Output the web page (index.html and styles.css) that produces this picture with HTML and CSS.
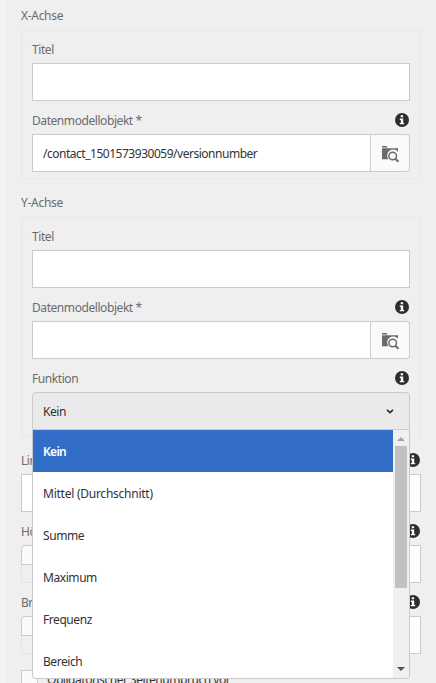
FILE: index.html
```html
<!DOCTYPE html>
<html lang="de">
<head>
<meta charset="utf-8">
<title>Diagramm-Eigenschaften</title>
<link rel="stylesheet" href="styles.css">
</head>
<body>
<svg class="defs" width="0" height="0" aria-hidden="true">
  <symbol id="info" viewBox="0 0 14 14">
    <circle cx="7" cy="7" r="7" fill="#2d2d2d"/>
    <path d="M5.7 2.3h2.4v2H5.7zM4.8 5.5h3.4v4.4h1v1.4H4.8V9.9h1V6.9h-1z" fill="#fff"/>
  </symbol>
  <symbol id="browse" viewBox="0 0 18 18">
    <path d="M1 1h4.6l1 1.4H1z" fill="#6b6b6b"/>
    <path d="M1 3.2h16v3.6a5.6 5.6 0 0 0-9.6 7.5H1z" fill="#6b6b6b"/>
    <circle cx="11.7" cy="11" r="3.8" fill="none" stroke="#6b6b6b" stroke-width="1.5"/>
    <path d="M14.4 13.8l3 3" stroke="#6b6b6b" stroke-width="2"/>
  </symbol>
</svg>
<main class="panel">
  <h2 class="heading">X-Achse</h2>
  <section class="well">
    <div class="field">
      <div class="label"><span>Titel</span></div>
      <div class="input"></div>
    </div>
    <div class="field">
      <div class="label"><span>Datenmodellobjekt *</span><svg class="info"><use href="#info"/></svg></div>
      <div class="group">
        <div class="input path">/contact_1501573930059/versionnumber</div>
        <div class="browse"><svg><use href="#browse"/></svg></div>
      </div>
    </div>
  </section>

  <h2 class="heading">Y-Achse</h2>
  <section class="well">
    <div class="field">
      <div class="label"><span>Titel</span></div>
      <div class="input"></div>
    </div>
    <div class="field">
      <div class="label"><span>Datenmodellobjekt *</span><svg class="info"><use href="#info"/></svg></div>
      <div class="group">
        <div class="input"></div>
        <div class="browse"><svg><use href="#browse"/></svg></div>
      </div>
    </div>
    <div class="field">
      <div class="label"><span>Funktion</span><svg class="info"><use href="#info"/></svg></div>
      <div class="select">
        <span class="value">Kein</span>
        <svg class="chevron" viewBox="0 0 8 5"><path d="M1 .8l3 2.8 3-2.8" fill="none" stroke="#2d2d2d" stroke-width="1.6"/></svg>
        <div class="menu">
          <ul class="options">
            <li class="option selected">Kein</li>
            <li class="option average">Mittel (Durchschnitt)</li>
            <li class="option">Summe</li>
            <li class="option">Maximum</li>
            <li class="option">Frequenz</li>
            <li class="option">Bereich</li>
          </ul>
          <div class="scrollbar">
            <i class="arrow up"></i>
            <i class="thumb"></i>
            <i class="arrow down"></i>
          </div>
        </div>
      </div>
    </div>
  </section>

  <div class="after">
    <div class="field">
      <div class="label"><span>Linie</span><svg class="info"><use href="#info"/></svg></div>
      <div class="input"></div>
    </div>
    <div class="field">
      <div class="label"><span>Höhe</span><svg class="info"><use href="#info"/></svg></div>
      <div class="group">
        <div class="stepper"><i></i><i></i></div>
        <div class="input"></div>
      </div>
    </div>
    <div class="field">
      <div class="label"><span>Breite</span><svg class="info"><use href="#info"/></svg></div>
      <div class="group">
        <div class="stepper"><i></i><i></i></div>
        <div class="input"></div>
      </div>
    </div>
    <div class="check"><i class="box"></i><span>Obligatorischer Seitenumbruch vor</span></div>
  </div>
</main>
</body>
</html>
```
FILE: styles.css
```css
* { box-sizing: border-box; }
html, body { height: 100%; }
body {
  margin: 0;
  overflow: hidden;
  background: #f4f4f4;
  color: #323232;
  font: 12px/18px "Noto Sans", "Open Sans", sans-serif;
  letter-spacing: -.43px;
}
.defs { position: absolute; }
.panel {
  height: 683px;
  margin-left: 6px;
  padding: 3px 15px 0;
  overflow: hidden;
  background: #efefef;
}
.heading {
  height: 27px;
  margin: 0;
  font-size: 12px;
  font-weight: 400;
  line-height: 26px;
  letter-spacing: -.3px;
  color: #6b6b6b;
}
.well {
  margin-bottom: 11px;
  padding: 0 10px 6px;
  border: 1px solid #e8e8e8;
}
.field { padding-top: 7px; }
.well .field:first-child { padding-top: 6px; }
.label {
  display: flex;
  justify-content: space-between;
  height: 26px;
  line-height: 26px;
  color: #6b6b6b;
}
.info { width: 14px; height: 14px; margin: 5px 1px 0 0; }
.input {
  height: 38px;
  padding: 0 10px;
  border: 1px solid #cbcbcb;
  background: #fff;
  line-height: 38px;
}
.path { letter-spacing: -.48px; }
.group { display: flex; }
.group .input { flex: 1; }
.browse {
  width: 39px;
  height: 38px;
  border: 1px solid #cbcbcb;
  border-left: 0;
  border-radius: 0 4px 4px 0;
  background: #fafafa;
}
.browse svg { display: block; width: 18px; height: 18px; margin: 10px 0 0 10px; }
.select {
  position: relative;
  display: flex;
  align-items: center;
  justify-content: space-between;
  height: 38px;
  padding: 0 15px 0 10px;
  border: 1px solid #cbcbcb;
  border-radius: 4px 4px 0 0;
  background: #eaeaea;
}
.value { padding-top: 2px; }
.chevron { width: 8px; height: 5px; }
.menu {
  position: absolute;
  z-index: 1;
  top: 37px;
  left: -1px;
  display: flex;
  width: 378px;
  height: 249px;
  overflow: hidden;
  border: 1px solid #cbcbcb;
  border-top: 0;
  border-radius: 0 0 4px 4px;
  background: #fff;
}
.options { flex: 1; margin: 0; padding: 0; list-style: none; }
.option { height: 42px; padding-left: 10px; line-height: 44px; }
.average { letter-spacing: -.25px; }
.selected { background: #326ec8; color: #fff; font-weight: 600; letter-spacing: -.7px; }
.scrollbar {
  display: flex;
  flex-direction: column;
  align-items: center;
  width: 16px;
  background: #f0f0f0;
}
.arrow { border: 4px solid transparent; }
.up { margin-top: 3px; border-bottom-color: #a3a3a3; }
.thumb { width: 12px; height: 142px; margin: 5px 2px 79px; background: #c1c1c1; }
.down { border-top-color: #505050; }
.after .field:first-child { padding-top: 0; }
.stepper { width: 36px; }
.stepper i {
  display: block;
  height: 18px;
  border: 1px solid #e4e4e4;
  border-top: 0;
  border-radius: 0 0 0 4px;
}
.stepper i:first-child {
  height: 20px;
  border: 1px solid #cbcbcb;
  border-radius: 4px 0 0 0;
  background: #fafafa;
}
.check { display: flex; gap: 9px; padding-top: 16px; line-height: 20px; letter-spacing: -.46px; }
.box { width: 17px; height: 17px; border: 1px solid #cbcbcb; background: #fafafa; }
```
